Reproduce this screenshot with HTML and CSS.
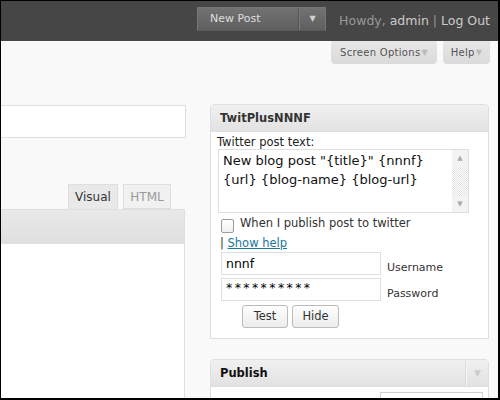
FILE: index.html
```html
<!DOCTYPE html>
<html>
<head>
<meta charset="utf-8">
<link rel="stylesheet" href="styles.css">
</head>
<body>
<div class="frame">
  <header class="topbar">
    <div class="newpost">
      <span class="np-label">New Post</span>
      <span class="np-arrow">▼</span>
    </div>
    <div class="howdy"><span class="dim">Howdy,</span> <span class="lite">admin</span> <span class="dim">|</span> <span class="lite">Log Out</span></div>
  </header>
  <div class="subbar">
    <div class="meta-tab tab-screen">Screen Options<span class="tri">▼</span></div>
    <div class="meta-tab tab-help">Help<span class="tri">▼</span></div>
  </div>
  <main class="content">
    <section class="leftcol">
      <div class="title-box"></div>
      <div class="editor-tabs">
        <div class="etab etab-active">Visual</div>
        <div class="etab etab-off">HTML</div>
      </div>
      <div class="toolbar"></div>
      <div class="editor-area"></div>
    </section>
    <aside class="rightcol">
      <div class="postbox">
        <div class="pb-head"><span class="pb-title">TwitPlusNNNF</span></div>
        <div class="pb-body">
          <div class="field-label">Twitter post text:</div>
          <div class="fake-textarea">
            <div class="ta-text">New blog post "{title}" {nnnf}<br>{url} {blog-name} {blog-url}</div>
            <div class="scrollbar">
              <div class="sb-btn">▲</div>
              <div class="sb-track"></div>
              <div class="sb-btn">▼</div>
            </div>
          </div>
          <div class="check-row">
            <span class="checkbox"></span>
            <span class="check-label">When I publish post to twitter</span>
          </div>
          <div class="help-row">| <a class="help-link" href="#">Show help</a></div>
          <div class="cred-row">
            <div class="text-input">nnnf</div>
            <span class="cred-label">Username</span>
          </div>
          <div class="cred-row">
            <div class="text-input pass">**********</div>
            <span class="cred-label">Password</span>
          </div>
          <div class="btn-row">
            <span class="btn btn-test">Test</span>
            <span class="btn btn-hide">Hide</span>
          </div>
        </div>
      </div>
      <div class="postbox publish">
        <div class="pb-head"><span class="pb-title dark">Publish</span><span class="pb-toggle">▼</span></div>
        <div class="pub-body"><div class="pub-input"></div></div>
      </div>
    </aside>
  </main>
</div>
</body>
</html>
```

FILE: styles.css
```css
* { box-sizing: border-box; }
html, body { margin: 0; padding: 0; }
body { font-family: "DejaVu Sans", Verdana, sans-serif; color: #333; }

.frame {
  width: 500px;
  height: 400px;
  border-style: solid;
  border-color: #000;
  border-width: 1px 2px 2px 1px;
  background: #f9f9f9;
  overflow: hidden;
  display: flex;
  flex-direction: column;
}

/* top bar */
.topbar {
  height: 40px;
  flex: none;
  background: #464646;
  display: flex;
  justify-content: flex-end;
  align-items: flex-start;
  padding: 6px 8px 0 0;
}
.newpost {
  width: 129px;
  height: 24px;
  display: flex;
  border: 1px solid #767676;
  border-bottom-color: #5a5a5a;
  background: linear-gradient(#727272, #5f5f5f);
  color: #dedede;
  font-size: 11px;
}
.np-label {
  width: 101px;
  padding-left: 12px;
  line-height: 22px;
  border-right: 1px solid #545454;
}
.np-arrow {
  flex: 1;
  text-align: center;
  font-size: 8px;
  line-height: 22px;
  color: #d0d0d0;
  border-left: 1px solid #7a7a7a;
}
.howdy {
  margin-left: 13px;
  margin-top: 2px;
  font-size: 12.5px;
  line-height: 24px;
  white-space: nowrap;
}
.howdy .dim { color: #999; }
.howdy .lite { color: #ccc; }

/* screen options bar */
.subbar {
  height: 23px;
  flex: none;
  display: flex;
  justify-content: flex-end;
  gap: 6px;
  padding-right: 8px;
}
.meta-tab {
  height: 23px;
  background: linear-gradient(#e6e6e6, #dbdbdb);
  border-radius: 0 0 4px 4px;
  color: #555;
  font-size: 10px;
  letter-spacing: 0.3px;
  display: flex;
  align-items: center;
  justify-content: center;
}
.tab-screen { width: 106px; }
.tab-help { width: 47px; }
.tri { font-size: 8px; color: #bbb; margin-left: 1px; }

/* content */
.content {
  flex: 1;
  display: flex;
  gap: 24px;
  min-height: 0;
}
.leftcol {
  width: 185px;
  flex: none;
  display: flex;
  flex-direction: column;
  padding-top: 41px;
}
.title-box {
  height: 33px;
  margin-left: -20px;
  width: 205px;
  background: #fff;
  border: 1px solid #dfdfdf;
  flex: none;
}
.editor-tabs {
  margin-top: 46px;
  height: 25px;
  display: flex;
  justify-content: flex-end;
  gap: 5px;
  padding-right: 15px;
  flex: none;
}
.etab {
  height: 25px;
  border: 1px solid #dfdfdf;
  border-bottom: none;
  font-size: 12px;
  line-height: 24px;
  text-align: center;
}
.etab-active { width: 50px; background: #e9e9e9; color: #333; }
.etab-off { width: 48px; background: #f1f1f1; color: #999; border-bottom: 1px solid #dfdfdf; }
.toolbar {
  width: 184px;
  height: 35px;
  flex: none;
  background: linear-gradient(#e9e9e9, #dfdfdf);
  border: 1px solid #dfdfdf;
  border-left: none;
}
.editor-area {
  width: 184px;
  flex: 1;
  background: #fff;
  border-right: 1px solid #dfdfdf;
}

/* right column */
.rightcol {
  width: 279px;
  flex: none;
  padding-top: 40px;
  display: flex;
  flex-direction: column;
  gap: 20px;
}
.postbox {
  border: 1px solid #dfdfdf;
  border-radius: 4px 4px 0 0;
  background: #fff;
  flex: none;
}
.pb-head {
  height: 27px;
  background: linear-gradient(#f0f0f0, #e2e2e2);
  border-bottom: 1px solid #dfdfdf;
  display: flex;
  align-items: center;
  padding-left: 9px;
  border-radius: 3px 3px 0 0;
}
.pb-title { font-weight: bold; font-size: 11.5px; color: #333; flex: 1; }
.pb-title.dark { color: #111; }
.pb-toggle {
  width: 22px;
  height: 26px;
  border-left: 1px solid #f4f4f4;
  box-shadow: -1px 0 0 #dcdcdc;
  color: #ccc;
  font-size: 9px;
  line-height: 26px;
  text-align: center;
}
.pb-body {
  padding: 3px 0 10px 0;
  font-size: 11.5px;
}
.field-label { padding-left: 6px; line-height: 14px; color: #222; }
.fake-textarea {
  margin-left: 7px;
  width: 251px;
  height: 64px;
  border: 1px solid #dfdfdf;
  display: flex;
}
.ta-text {
  flex: 1;
  font-size: 13px;
  line-height: 19px;
  padding: 1px 0 0 4px;
  color: #111;
  white-space: nowrap;
}
.scrollbar {
  width: 16px;
  display: flex;
  flex-direction: column;
}
.sb-btn {
  height: 16px;
  background: #f3f3f3;
  color: #aaa;
  font-size: 7px;
  line-height: 16px;
  text-align: center;
}
.sb-track {
  flex: 1;
  background: repeating-conic-gradient(#ffffff 0 25%, #e2e2e2 0 50%) 0 0 / 2px 2px;
}
.check-row {
  margin-top: 2px;
  display: flex;
  align-items: flex-start;
  padding-left: 10px;
  gap: 6px;
}
.checkbox {
  width: 13px;
  height: 14px;
  margin-top: 4px;
  border: 1px solid #9a9a9a;
  border-radius: 2px;
  background: linear-gradient(#fff, #f0f0f0);
}
.check-label { line-height: 14px; color: #333; margin-top: 1px; }
.help-row {
  margin-top: 3px;
  padding-left: 9px;
  line-height: 14px;
  color: #333;
}
.help-link { color: #21759b; text-decoration: underline; }
.cred-row {
  display: flex;
  align-items: flex-start;
  padding-left: 10px;
  margin-top: 3px;
}
.help-row + .cred-row { margin-top: 2px; }
.text-input {
  width: 160px;
  height: 23px;
  border: 1px solid #dfdfdf;
  background: #fff;
  font-size: 12.5px;
  line-height: 21px;
  padding-left: 4px;
  color: #000;
}
.text-input.pass { letter-spacing: 2.4px; font-size: 12.5px; line-height: 17px; }
.cred-label { margin-left: 6px; padding-top: 9px; font-size: 11px; color: #333; }
.btn-row {
  margin-top: 4px;
  padding-left: 31px;
  display: flex;
  gap: 4px;
}
.btn {
  height: 23px;
  border: 1px solid #bbb;
  border-radius: 3px;
  background: linear-gradient(#fefefe, #ececec);
  text-align: center;
  line-height: 21px;
  font-size: 11.5px;
  color: #333;
}
.btn-test { width: 46px; }
.btn-hide { width: 47px; }

.publish .pb-head { padding-right: 0; }
.pub-body { height: 40px; position: relative; }
.pub-input {
  position: absolute;
  left: 169px;
  top: 5px;
  width: 103px;
  height: 30px;
  border: 1px solid #cfcfcf;
}
```
